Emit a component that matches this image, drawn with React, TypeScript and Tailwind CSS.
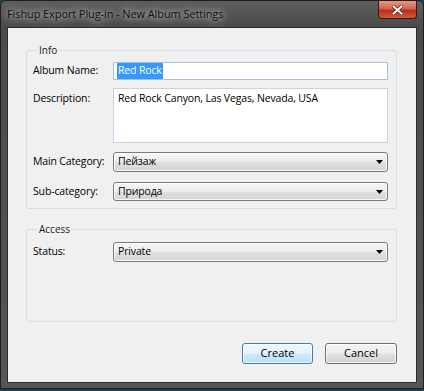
import React from 'react'

const font = { fontFamily: '"Open Sans", "Noto Sans", sans-serif' }

function Select({ value }: { value: string }) {
  return (
    <div className="relative flex-1 h-full flex items-center pl-[4px] rounded-[3px] border border-[#7a7a7a] bg-[linear-gradient(to_bottom,#f6f6f6_0%,#ececec_50%,#e0e0e0_51%,#d4d4d4_100%)] shadow-[inset_0_0_0_1px_rgba(255,255,255,0.8)] text-[10.5px] tracking-[-0.15px] text-black">
      <span>{value}</span>
      <svg className="absolute right-[4px] top-1/2 -translate-y-1/2" width="7" height="4" viewBox="0 0 7 4">
        <path d="M0 0H7L3.5 4Z" fill="#000" />
      </svg>
    </div>
  )
}

function Row({ label, h, children }: { label: string; h: string; children: React.ReactNode }) {
  return (
    <div className={`flex items-center ${h}`}>
      <span className="w-[80px] text-[10.5px] tracking-[-0.15px] text-black">{label}</span>
      {children}
    </div>
  )
}

export default function App() {
  return (
    <div className="w-[424px] h-[391px] bg-[#16434c] overflow-hidden" style={font}>
      <div className="h-[389px] flex flex-col rounded-t-[6px] border border-[#1e1e1e] bg-[linear-gradient(to_bottom,#5e5e5e_0px,#4a4a4a_26px,#565656_100%)]">
        {/* title bar */}
        <div className="h-[26px] flex items-start justify-between shrink-0">
          <span className="pl-[6px] pt-[5px] text-[11px] tracking-[-0.1px] text-[#111] [text-shadow:0_0_6px_rgba(255,255,255,0.8),0_0_12px_rgba(255,255,255,0.6)]">
            Fishup Export Plug-in - New Album Settings
          </span>
          <div className="mr-[6px] w-[39px] h-[18px] flex items-center justify-center rounded-b-[4px] border border-t-0 border-[#3a1a14] bg-[linear-gradient(to_bottom,#e39a86_0%,#d06450_45%,#b8301c_55%,#d05a3c_100%)]">
            <svg width="11" height="10" viewBox="0 0 11 10">
              <path d="M1.5 1.5L9.5 8.5M9.5 1.5L1.5 8.5" stroke="#5a1a10" strokeWidth="3.4" strokeLinecap="square" />
              <path d="M1.5 1.5L9.5 8.5M9.5 1.5L1.5 8.5" stroke="#fff" strokeWidth="2" strokeLinecap="square" />
            </svg>
          </div>
        </div>

        {/* client area */}
        <div className="flex-1 mx-[6px] mb-[5px] border border-[#2c2c2c] bg-[#f0f0f0] flex flex-col pl-[18px] pr-[19px] pt-[15px]">
          <fieldset className="rounded-[3px] border border-[#d5dfe5] px-[6px] pt-[4px] pb-[7px] flex flex-col">
            <legend className="ml-[5px] px-[1px] text-[10px] text-[#222]">Info</legend>
            <div className="flex flex-col gap-[8px] pr-[2px]">
              <Row label="Album Name:" h="h-[18px]">
                <div className="flex-1 h-full flex items-center pl-[3px] border border-[#adbfd6] bg-white text-[10.5px] tracking-[-0.15px]">
                  <span className="bg-[#3399ff] text-white px-[1px]">Red Rock</span>
                </div>
              </Row>
              <div className="flex h-[55px]">
                <span className="w-[80px] pt-[3px] text-[10.5px] tracking-[-0.15px] text-black">Description:</span>
                <div className="flex-1 h-full pl-[4px] pt-[2px] border border-[#c5d4e3] bg-white text-[10.5px] tracking-[-0.15px] text-black">
                  Red Rock Canyon, Las Vegas, Nevada, USA
                </div>
              </div>
              <Row label="Main Category:" h="h-[20px] mt-[1px]">
                <Select value="Пейзаж" />
              </Row>
              <Row label="Sub-category:" h="h-[19px] mt-[2px]">
                <Select value="Природа" />
              </Row>
            </div>
          </fieldset>

          <fieldset className="mt-[13px] h-[100px] rounded-[3px] border border-[#d5dfe5] px-[6px] pt-[5px] flex flex-col">
            <legend className="ml-[5px] px-[1px] text-[10px] text-[#222]">Access</legend>
            <div className="pr-[2px]">
              <Row label="Status:" h="h-[20px]">
                <Select value="Private" />
              </Row>
            </div>
          </fieldset>

          <div className="flex justify-end gap-[12px] mt-[21px]">
            <button className="w-[71px] h-[21px] rounded-[3px] border border-[#3c7fb1] bg-[linear-gradient(to_bottom,#f0f8fd_0%,#e2f2fc_50%,#cbe9fa_51%,#bfe1f5_100%)] shadow-[inset_0_0_0_1px_rgba(255,255,255,0.7)] text-[11px] text-black">
              Create
            </button>
            <button className="w-[72px] h-[21px] rounded-[3px] border border-[#707070] bg-[linear-gradient(to_bottom,#f4f4f4_0%,#ececec_50%,#dfdfdf_51%,#d3d3d3_100%)] shadow-[inset_0_0_0_1px_rgba(255,255,255,0.8)] text-[11px] text-black">
              Cancel
            </button>
          </div>
        </div>
      </div>
    </div>
  )
}
